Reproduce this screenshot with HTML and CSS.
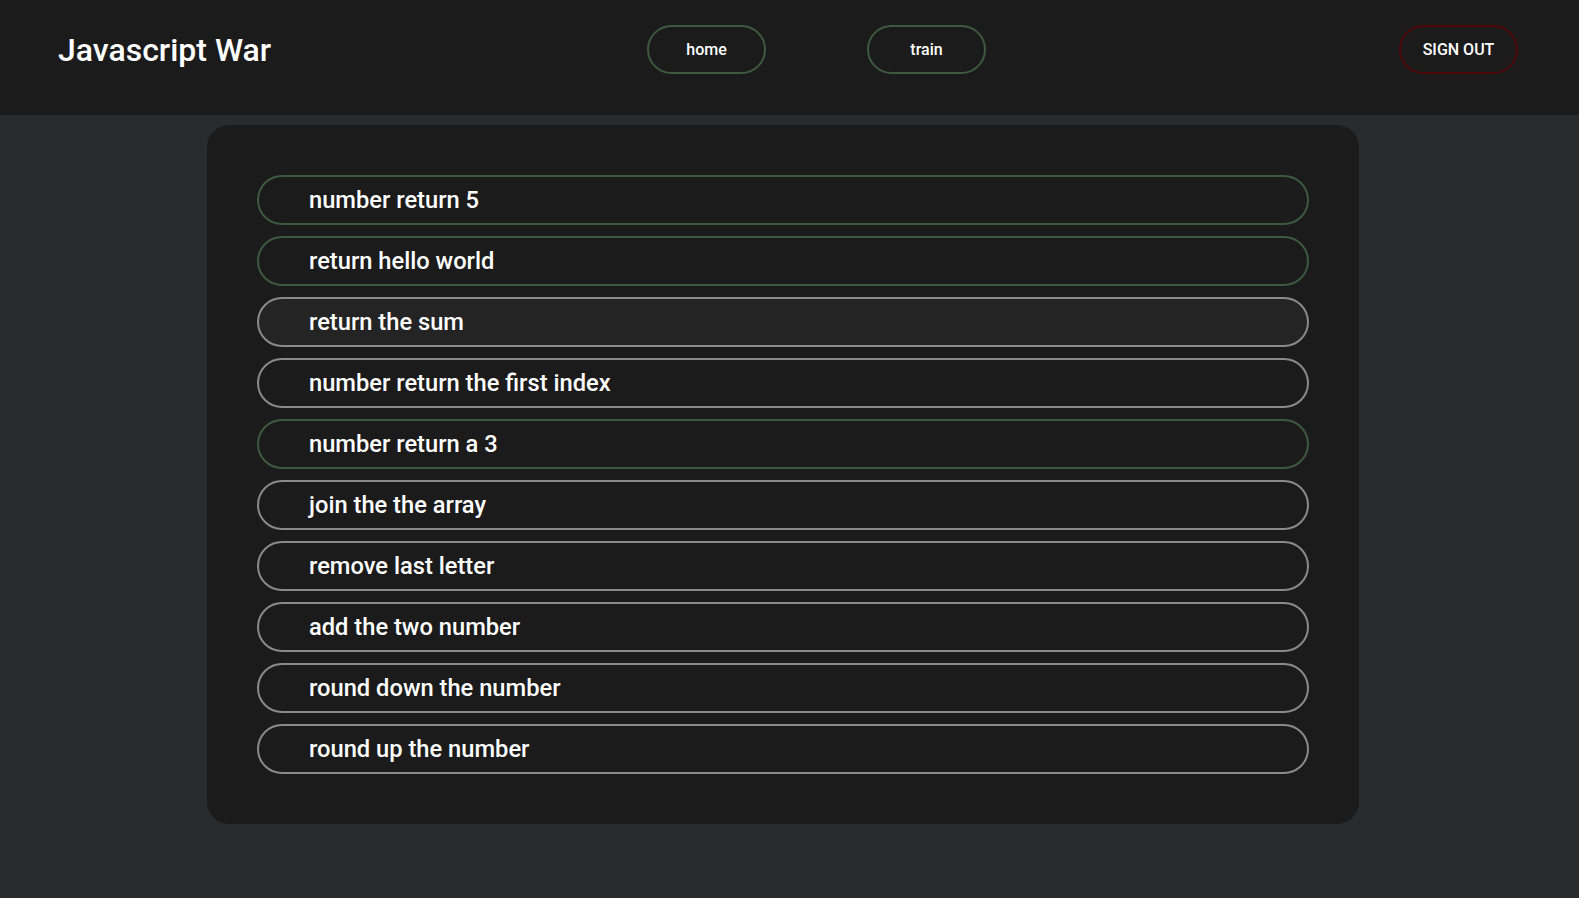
FILE: index.html
```html
<!DOCTYPE html>
<html lang="en">
<head>
<meta charset="utf-8">
<title>Javascript War</title>
<link rel="stylesheet" href="styles.css">
</head>
<body>
<header class="topbar">
  <h1 class="brand">Javascript War</h1>
  <nav class="nav">
    <a class="pill pill-green" href="#">home</a>
    <a class="pill pill-green" href="#">train</a>
  </nav>
  <a class="pill pill-red signout" href="#">SIGN OUT</a>
</header>
<main class="card">
  <ul class="list">
    <li class="item done">number return 5</li>
    <li class="item done">return hello world</li>
    <li class="item active">return the sum</li>
    <li class="item">number return the first index</li>
    <li class="item done">number return a 3</li>
    <li class="item">join the the array</li>
    <li class="item">remove last letter</li>
    <li class="item">add the two number</li>
    <li class="item">round down the number</li>
    <li class="item">round up the number</li>
  </ul>
</main>
</body>
</html>
```
FILE: styles.css
```css
html, body {
  margin: 0;
  padding: 0;
}
body {
  background: #2a2b2d;
  font-family: Roboto, "Liberation Sans", Arial, sans-serif;
  color: #fff;
  min-height: 898px;
}
.topbar {
  height: 115px;
  background: #1b1b1b;
  display: flex;
  align-items: flex-start;
  padding: 25px 61px 0 58px;
  box-sizing: border-box;
}
.brand {
  margin: 0;
  height: 49px;
  display: flex;
  align-items: center;
  font-size: 32px;
  font-weight: 500;
  white-space: nowrap;
  width: 212px;
  flex: none;
}
.nav {
  display: flex;
  gap: 101px;
  margin-left: 377px;
}
.pill {
  display: flex;
  align-items: center;
  justify-content: center;
  width: 119px;
  height: 49px;
  box-sizing: border-box;
  border-radius: 25px;
  color: #fff;
  text-decoration: none;
  font-size: 16px;
  font-weight: 500;
}
.pill-green {
  border: 2px solid #3d5a3e;
}
.pill-red {
  border: 2px solid #4d0708;
}
.signout {
  margin-left: auto;
}
.card {
  display: block;
  width: 1152px;
  margin: 10px 0 0 207px;
  box-sizing: border-box;
  padding: 50px;
  background: #1b1b1b;
  border-radius: 22px;
}
.list {
  list-style: none;
  margin: 0;
  padding: 0;
  display: flex;
  flex-direction: column;
  gap: 11px;
}
.item {
  height: 50px;
  box-sizing: border-box;
  border: 2px solid #8a8a8a;
  border-radius: 25px;
  padding-left: 50px;
  display: flex;
  align-items: center;
  font-size: 23.7px;
  font-weight: 500;
  background: #1b1b1b;
}
.item.done {
  border-color: #3d5a3e;
}
.item.active {
  background: #242424;
}
```
